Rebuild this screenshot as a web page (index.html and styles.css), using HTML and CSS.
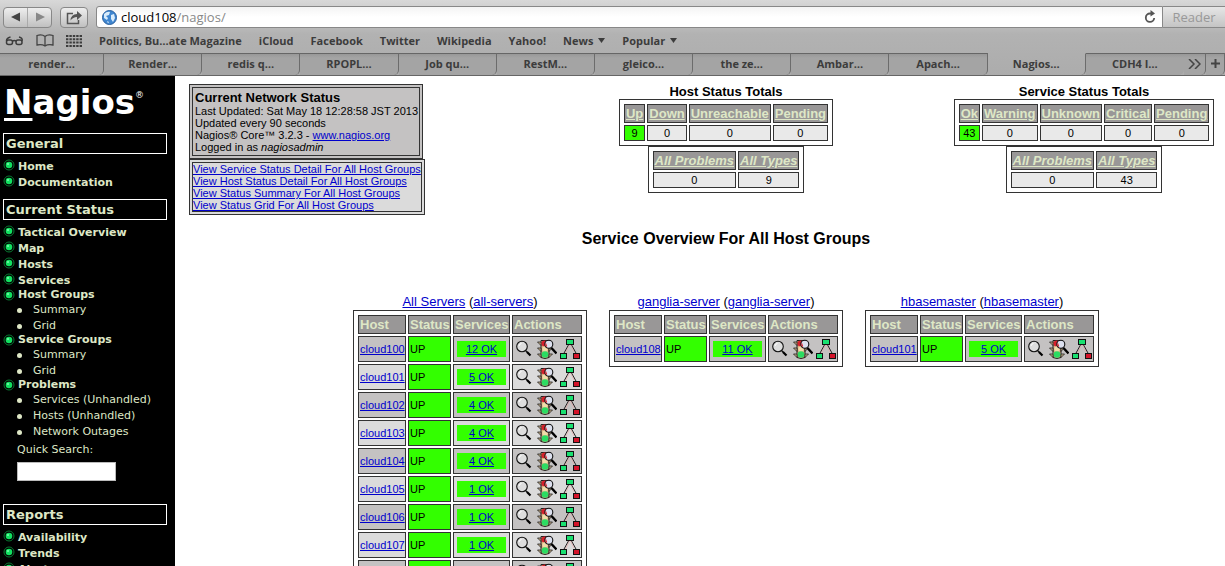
FILE: index.html
```
<!DOCTYPE html>
<html lang="en">
<head>
<meta charset="utf-8">
<title>Nagios</title>
<link rel="stylesheet" href="styles.css">
</head>
<body>
<svg class="sprite" aria-hidden="true">
  <symbol id="lens" viewBox="0 0 20 20">
    <circle cx="8" cy="7.500" r="5.300" fill="#ddd" stroke="#111" stroke-width="1.1"/>
    <path d="M5 7a3 3 0 0 1 2.500-2.500" fill="none" stroke="#fff"/>
    <path d="M11.500 11.500l2 2" stroke="#111" stroke-width="1.200"/>
    <path d="M13 13l3.500 3.500" stroke="#000" stroke-width="2.200"/>
  </symbol>
  <symbol id="light" viewBox="0 0 20 20">
    <path d="M4 1.500h8v17q-4 2-8 0z" fill="#d8b184" stroke="#222"/>
    <path d="M.500 3H4v3.500zM.500 9H4v3.500zM.500 15H4v3.500zM12 9h3l-3 3.500zM12 15h3.500L12 18.500z" fill="#ccb28a" stroke="#222" stroke-width=".8"/>
    <circle cx="7.500" cy="4.500" r="3" fill="#d5202b"/>
    <circle cx="8" cy="10" r="2.700" fill="#f0dcaa"/>
    <circle cx="8" cy="15.500" r="3.300" fill="#2bdc62"/>
    <circle cx="11.800" cy="5.300" r="4" fill="#dce0ee" stroke="#111" stroke-width="1.100"/>
    <path d="M8.800 4.500q0 2 1 3" stroke="#d5202b" stroke-width="1.200" fill="none"/>
    <path d="M14.500 9l5 5.500" stroke="#000" stroke-width="2.400"/>
  </symbol>
  <symbol id="tree" viewBox="0 0 20 20">
    <path d="M9 5L3.500 15M11 5l5.500 10" stroke="#222" fill="none"/>
    <path d="M9.500 6L5.500 14M10.500 6l3.500 7" stroke="#e99" stroke-width=".5" fill="none"/>
    <rect x="6.500" y=".5" width="7" height="5" fill="#19e070" stroke="#111"/>
    <rect x=".5" y="14.500" width="6" height="5" fill="#19e070" stroke="#111"/>
    <rect x="13.500" y="14.500" width="6" height="5" fill="#d4142a" stroke="#111"/>
  </symbol>
  <symbol id="dot" viewBox="0 0 12 12">
    <circle cx="6" cy="6" r="5" fill="#000" stroke="#087a32" stroke-width="1"/>
    <circle cx="6" cy="6" r="3.300" fill="#12e060"/>
    <circle cx="5" cy="5" r="1" fill="#7dffae"/>
  </symbol>
</svg>

<header class="chrome">
  <div class="toolbar">
    <div class="nav-buttons">
      <button aria-label="Back"><svg width="10" height="10" viewBox="0 0 10 10"><path d="M0 5l9-4.500v9z" fill="#444"/></svg></button>
      <button aria-label="Forward"><svg width="10" height="10" viewBox="0 0 10 10"><path d="M10 5L1 .5v9z" fill="#888"/></svg></button>
    </div>
    <button class="share" aria-label="Share"><svg width="17" height="15" viewBox="0 0 17 15"><path d="M7 3.500H1.500v10h11V10" fill="none" stroke="#555" stroke-width="1.500"/><path d="M4.500 10.500Q5 4 11 4V1l5 4.500-5 4.500V7Q7 7 4.500 10.500z" fill="#555"/></svg></button>
    <div class="address">
      <svg width="15" height="15" viewBox="0 0 15 15"><circle cx="7.500" cy="7.500" r="7" fill="#3f86d0" stroke="#2a609f"/><path d="M2 4q3-3 6-2l-1 3-3 1 2 2-1 2-3-2zM9 5l3-1 1 4-2 4-2-3zM5 11l2 1-1 1.500z" fill="#d9ecfb"/></svg>
      <span class="url">cloud108<span>/nagios/</span></span>
      <svg width="12" height="14" viewBox="0 0 12 14"><path d="M8 3.500H6A4.200 4.200 0 1 0 10.200 8" fill="none" stroke="#555" stroke-width="1.800"/><path d="M6.500 0l4.500 3.500-4.500 3z" fill="#555"/></svg>
    </div>
    <button class="reader">Reader</button>
  </div>
  <nav class="bookmarks">
    <div class="bookmark-icons">
      <svg width="19" height="10" viewBox="0 0 19 10"><g fill="none" stroke="#3c3c3c" stroke-width="1.500"><rect x="1.500" y="4" width="6" height="4.500" rx="2"/><rect x="11" y="4" width="6" height="4.500" rx="2"/><path d="M7.500 5q1.700-1 3.500 0M1.500 5q0-3 4-4M17 5q1-3-3-4"/></g></svg>
      <svg width="18" height="13" viewBox="0 0 18 13"><path d="M9 2.500Q6 0 1 1.500v9.500q5-1 8 1 3-2 8-1V1.500Q12 0 9 2.500zV12" fill="none" stroke="#444" stroke-width="1.300"/></svg>
      <svg width="16" height="12" viewBox="0 0 16 12"><path d="M0 1h16M0 4.300h16M0 7.600h16M0 10.900h16" stroke="#3c3c3c" stroke-width="2" stroke-dasharray="2.400 1"/></svg>
    </div>
    <a href="#">Politics, Bu…ate Magazine</a>
    <a href="#">iCloud</a>
    <a href="#">Facebook</a>
    <a href="#">Twitter</a>
    <a href="#">Wikipedia</a>
    <a href="#">Yahoo!</a>
    <a href="#">News <svg width="7" height="5" viewBox="0 0 7 5"><path d="M0 0h7L3.500 5z" fill="#3c3c3c"/></svg></a>
    <a href="#">Popular <svg width="7" height="5" viewBox="0 0 7 5"><path d="M0 0h7L3.500 5z" fill="#3c3c3c"/></svg></a>
  </nav>
  <div class="tabs">
    <button>render…</button>
    <button>Render…</button>
    <button>redis q…</button>
    <button>RPOPL…</button>
    <button>Job qu…</button>
    <button>RestM…</button>
    <button>gleico…</button>
    <button>the ze…</button>
    <button>Ambar…</button>
    <button>Apach…</button>
    <button class="active">Nagios…</button>
    <button class="last">CDH4 I…</button>
    <button class="more" aria-label="More tabs"><svg width="13" height="10" viewBox="0 0 13 10"><path d="M1 0l5 5-5 5M7 0l5 5-5 5" fill="none" stroke="#444" stroke-width="1.500"/></svg></button>
    <button class="add" aria-label="New tab"><svg width="9" height="9" viewBox="0 0 9 9"><path d="M4.500 0v9M0 4.500h9" stroke="#444" stroke-width="2"/></svg></button>
  </div>
</header>

<div class="frame">
  <aside class="sidebar">
    <div class="logo"><span class="initial">N</span>agios<sup>®</sup></div>
    <h2>General</h2>
    <ul>
      <li><svg><use href="#dot"/></svg><a href="#">Home</a></li>
      <li><svg><use href="#dot"/></svg><a href="#">Documentation</a></li>
    </ul>
    <h2>Current Status</h2>
    <ul>
      <li><svg><use href="#dot"/></svg><a href="#">Tactical Overview</a></li>
      <li><svg><use href="#dot"/></svg><a href="#">Map</a></li>
      <li><svg><use href="#dot"/></svg><a href="#">Hosts</a></li>
      <li><svg><use href="#dot"/></svg><a href="#">Services</a></li>
      <li class="group"><svg><use href="#dot"/></svg><a href="#">Host Groups</a></li>
      <li class="sub"><a href="#">Summary</a></li>
      <li class="sub"><a href="#">Grid</a></li>
      <li class="group"><svg><use href="#dot"/></svg><a href="#">Service Groups</a></li>
      <li class="sub"><a href="#">Summary</a></li>
      <li class="sub"><a href="#">Grid</a></li>
      <li class="group"><svg><use href="#dot"/></svg><a href="#">Problems</a></li>
      <li class="sub"><a href="#">Services (Unhandled)</a></li>
      <li class="sub"><a href="#">Hosts (Unhandled)</a></li>
      <li class="sub"><a href="#">Network Outages</a></li>
    </ul>
    <div class="search">
      <label for="quick">Quick Search:</label>
      <input id="quick" type="text">
    </div>
    <h2>Reports</h2>
    <ul>
      <li><svg><use href="#dot"/></svg><a href="#">Availability</a></li>
      <li><svg><use href="#dot"/></svg><a href="#">Trends</a></li>
      <li><svg><use href="#dot"/></svg><a href="#">Alerts</a></li>
    </ul>
  </aside>

  <main class="main">
    <div class="summary">
      <div class="info">
        <div class="panel status"><div>
          <h3>Current Network Status</h3>
          <p>Last Updated: Sat May 18 12:28:58 JST 2013</p>
          <p>Updated every 90 seconds</p>
          <p>Nagios® Core™ 3.2.3 - <a href="#">www.nagios.org</a></p>
          <p>Logged in as <i>nagiosadmin</i></p>
        </div></div>
        <div class="panel views"><div>
          <p><a href="#">View Service Status Detail For All Host Groups</a></p>
          <p><a href="#">View Host Status Detail For All Host Groups</a></p>
          <p><a href="#">View Status Summary For All Host Groups</a></p>
          <p><a href="#">View Status Grid For All Host Groups</a></p>
        </div></div>
      </div>
      <section class="totals">
        <h3>Host Status Totals</h3>
        <table>
          <tr><th><a href="#">Up</a></th><th><a href="#">Down</a></th><th><a href="#">Unreachable</a></th><th><a href="#">Pending</a></th></tr>
          <tr><td class="ok">9</td><td>0</td><td>0</td><td>0</td></tr>
        </table>
        <table class="all">
          <tr><th><a href="#">All Problems</a></th><th><a href="#">All Types</a></th></tr>
          <tr><td>0</td><td>9</td></tr>
        </table>
      </section>
      <section class="totals">
        <h3>Service Status Totals</h3>
        <table>
          <tr><th><a href="#">Ok</a></th><th><a href="#">Warning</a></th><th><a href="#">Unknown</a></th><th><a href="#">Critical</a></th><th><a href="#">Pending</a></th></tr>
          <tr><td class="ok">43</td><td>0</td><td>0</td><td>0</td><td>0</td></tr>
        </table>
        <table class="all">
          <tr><th><a href="#">All Problems</a></th><th><a href="#">All Types</a></th></tr>
          <tr><td>0</td><td>43</td></tr>
        </table>
      </section>
    </div>

    <h1>Service Overview For All Host Groups</h1>

    <div class="groups">
      <section>
        <p><a href="#">All Servers</a> (<a href="#">all-servers</a>)</p>
        <table class="hosts">
          <tr><th class="host">Host</th><th class="state">Status</th><th class="services">Services</th><th class="actions">Actions</th></tr>
          <tr><td><a href="#">cloud100</a></td><td class="ok">UP</td><td><a class="count" href="#">12 OK</a></td><td class="icons"><svg><use href="#lens"/></svg><svg><use href="#light"/></svg><svg><use href="#tree"/></svg></td></tr>
          <tr><td><a href="#">cloud101</a></td><td class="ok">UP</td><td><a class="count" href="#">5 OK</a></td><td class="icons"><svg><use href="#lens"/></svg><svg><use href="#light"/></svg><svg><use href="#tree"/></svg></td></tr>
          <tr><td><a href="#">cloud102</a></td><td class="ok">UP</td><td><a class="count" href="#">4 OK</a></td><td class="icons"><svg><use href="#lens"/></svg><svg><use href="#light"/></svg><svg><use href="#tree"/></svg></td></tr>
          <tr><td><a href="#">cloud103</a></td><td class="ok">UP</td><td><a class="count" href="#">4 OK</a></td><td class="icons"><svg><use href="#lens"/></svg><svg><use href="#light"/></svg><svg><use href="#tree"/></svg></td></tr>
          <tr><td><a href="#">cloud104</a></td><td class="ok">UP</td><td><a class="count" href="#">4 OK</a></td><td class="icons"><svg><use href="#lens"/></svg><svg><use href="#light"/></svg><svg><use href="#tree"/></svg></td></tr>
          <tr><td><a href="#">cloud105</a></td><td class="ok">UP</td><td><a class="count" href="#">1 OK</a></td><td class="icons"><svg><use href="#lens"/></svg><svg><use href="#light"/></svg><svg><use href="#tree"/></svg></td></tr>
          <tr><td><a href="#">cloud106</a></td><td class="ok">UP</td><td><a class="count" href="#">1 OK</a></td><td class="icons"><svg><use href="#lens"/></svg><svg><use href="#light"/></svg><svg><use href="#tree"/></svg></td></tr>
          <tr><td><a href="#">cloud107</a></td><td class="ok">UP</td><td><a class="count" href="#">1 OK</a></td><td class="icons"><svg><use href="#lens"/></svg><svg><use href="#light"/></svg><svg><use href="#tree"/></svg></td></tr>
          <tr><td></td><td class="ok"></td><td></td><td class="icons"><svg><use href="#lens"/></svg><svg><use href="#light"/></svg><svg><use href="#tree"/></svg></td></tr>
        </table>
      </section>
      <section>
        <p><a href="#">ganglia-server</a> (<a href="#">ganglia-server</a>)</p>
        <table class="hosts">
          <tr><th class="host">Host</th><th class="state">Status</th><th class="services">Services</th><th class="actions">Actions</th></tr>
          <tr><td><a href="#">cloud108</a></td><td class="ok">UP</td><td><a class="count" href="#">11 OK</a></td><td class="icons"><svg><use href="#lens"/></svg><svg><use href="#light"/></svg><svg><use href="#tree"/></svg></td></tr>
        </table>
      </section>
      <section>
        <p><a href="#">hbasemaster</a> (<a href="#">hbasemaster</a>)</p>
        <table class="hosts">
          <tr><th class="host">Host</th><th class="state">Status</th><th class="services">Services</th><th class="actions">Actions</th></tr>
          <tr><td><a href="#">cloud101</a></td><td class="ok">UP</td><td><a class="count" href="#">5 OK</a></td><td class="icons"><svg><use href="#lens"/></svg><svg><use href="#light"/></svg><svg><use href="#tree"/></svg></td></tr>
        </table>
      </section>
    </div>
  </main>
</div>
</body>
</html>
```
FILE: styles.css
```
* { box-sizing: border-box; }
body {
  margin: 0;
  height: 100vh;
  display: flex;
  flex-direction: column;
  overflow: hidden;
  background: #fff;
  color: #000;
  font-family: "Liberation Sans", Arial, sans-serif;
  font-size: 11px;
  line-height: 12px;
}
h1, h2, h3, p, ul { margin: 0; padding: 0; }
ul { list-style: none; }
button { margin: 0; padding: 0; border: 0; background: none; font: inherit; color: inherit; }
svg { flex: none; }
.sprite { display: none; }

/* Browser window */
.chrome {
  flex: none;
  background: linear-gradient(#d8d8d8, #b2b2b2 34px, #acacac);
  font-family: "Open Sans", "Noto Sans", sans-serif;
  color: #3c3c3c;
}
.toolbar { display: flex; align-items: center; padding: 6px 0 0 3px; height: 28px; }
.nav-buttons, .share {
  display: flex;
  height: 21px;
  border: 1px solid #888;
  border-radius: 4px;
  background: linear-gradient(#eee, #c0c0c0);
}
.nav-buttons { width: 49px; margin-right: 8px; }
.nav-buttons button { flex: 1; display: flex; align-items: center; justify-content: center; }
.nav-buttons button + button { border-left: 1px solid #aaa; }
.share { width: 28px; align-items: center; justify-content: center; margin-right: 8px; }
.address {
  flex: 1;
  display: flex;
  align-items: center;
  gap: 4px;
  height: 22px;
  padding: 0 6px 0 5px;
  border: 1px solid #888;
  border-radius: 3px 0 0 3px;
  background: linear-gradient(#f4f4f4, #fff 10px);
}
.url { flex: 1; font-size: 13px; line-height: 18px; color: #000; }
.url span { color: #888; }
.reader {
  width: 62px;
  height: 22px;
  border-top: 1px solid #888;
  border-bottom: 1px solid #888;
  background: linear-gradient(#e6e6e6, #c4c4c4);
  font-size: 13px;
  color: #999;
}
.bookmarks { display: flex; align-items: center; gap: 17px; height: 25px; padding-left: 5px; font-size: 11px; font-weight: 700; line-height: 16px; }
.bookmarks a { color: inherit; text-decoration: none; white-space: nowrap; }
.bookmarks a svg { margin-left: 2px; vertical-align: 2px; }
.bookmark-icons { display: flex; align-items: center; gap: 12px; }
.tabs {
  display: grid;
  grid-template-columns: 106fr repeat(11, 100fr) 22px 19px;
  height: 23px;
  border-bottom: 1px solid #666;
  font-size: 11px;
  font-weight: 700;
  line-height: 16px;
}
.tabs button {
  display: flex;
  align-items: center;
  justify-content: center;
  padding-bottom: 2px;
  border-top: 1px solid #666;
  border-right: 1px solid #6c6c6c;
  border-bottom-right-radius: 5px;
  background: linear-gradient(#989898, #a4a4a4 4px);
}
.tabs .active { border-top-color: transparent; background: none; border-radius: 0 0 5px 5px; }
.tabs .last { border-right: 0; }

/* Nagios frames */
.frame { flex: 1; min-height: 0; display: flex; }
.sidebar {
  flex: none;
  width: 175px;
  padding: 9px 8px 0 3px;
  overflow: hidden;
  background: #000;
  color: #dee7c6;
  font-family: "DejaVu Sans", Verdana, sans-serif;
  line-height: 16px;
}
.sidebar a { color: inherit; text-decoration: none; }
.logo { padding-left: 1px; margin-bottom: 12px; color: #fff; font-size: 34px; font-weight: 700; line-height: 34px; height: 36px; white-space: nowrap; }
.logo sup { font-size: 9px; font-weight: 400; line-height: 9px; vertical-align: 16px; }
.initial { text-decoration: underline; text-decoration-thickness: 3px; text-underline-offset: 4px; }
.sidebar h2 { padding: 0 2px; border: 1px solid #fff; font-size: 13px; line-height: 19px; }
.sidebar ul { padding: 5px 0 8px; }
.sidebar li { display: flex; font-weight: 700; gap: 3px; height: 16px; }
.sidebar li svg { width: 12px; height: 12px; }
.sidebar .group { height: 13px; line-height: 11px; }
.sidebar .sub { align-items: center; padding-left: 14px; gap: 11px; font-weight: 400; }
.sub::before { content: ""; width: 5px; height: 5px; border-radius: 50%; background: #dee7c6; }
.search { display: flex; flex-direction: column; align-items: flex-start; gap: 4px; padding: 0 0 23px 14px; margin-top: -6px; }
.search input { width: 99px; height: 19px; padding: 0 2px; border: 1px solid #bbb; background: #fff; }

.main { flex: 1; min-width: 0; overflow: hidden; padding: 8px 0 0 14px; }
.main a { color: #0000cc; }
.summary, .main h1, .groups { margin-right: -38px; }
.summary { display: grid; grid-template-columns: repeat(3, 1fr); }
.info { display: flex; flex-direction: column; align-items: flex-start; white-space: nowrap; }
.panel { padding: 2px; border: 1px solid #333; background: #c4c2c2; }
.panel > div { padding: 2px 1px 2px 2px; border: 1px solid #333; }
.panel h3 { font-size: 13px; line-height: 15px; }
.views { background: #dbdbdb; }
.views > div { padding: 0; }

.totals { display: flex; flex-direction: column; align-items: center; }
.totals h3 { font-size: 13px; line-height: 15px; }
table { padding: 2px; border: 1px solid #333; border-spacing: 2px; }
th { padding: 1px; border: 1px solid #333; background: #999797; color: #dee7c6; font-size: 13px; line-height: 15px; }
.main th a { color: #dee7c6; }
td { padding: 1px; border: 1px solid #333; }
.totals td { background: #e9e9e9; text-align: center; }
.all th { font-style: italic; }
.totals .ok, .hosts .ok { background: #33ff00; }

.main h1 { margin-top: 36px; font-size: 16px; line-height: 20px; text-align: center; }
.summary { height: 109px; }
.groups { display: flex; justify-content: center; align-items: flex-start; gap: 22px; margin-top: 45px; }
.groups p { font-size: 13px; line-height: 16px; text-align: center; }
.hosts { width: 234px; table-layout: fixed; }
.hosts th { text-align: left; }
.host { width: 48px; }
.state { width: 43px; }
.services { width: 57px; }
.hosts td { height: 26px; background: #dbdbdb; }
.hosts tr:nth-child(even) td:not(.ok) { background: #c4c2c2; }
.count { display: block; margin: 0 2px; background: #33ff00; line-height: 16px; text-align: center; }
.icons svg { width: 20px; height: 20px; margin-right: 3px; vertical-align: top; }
.icons svg:last-child { margin-right: 0; }
```
